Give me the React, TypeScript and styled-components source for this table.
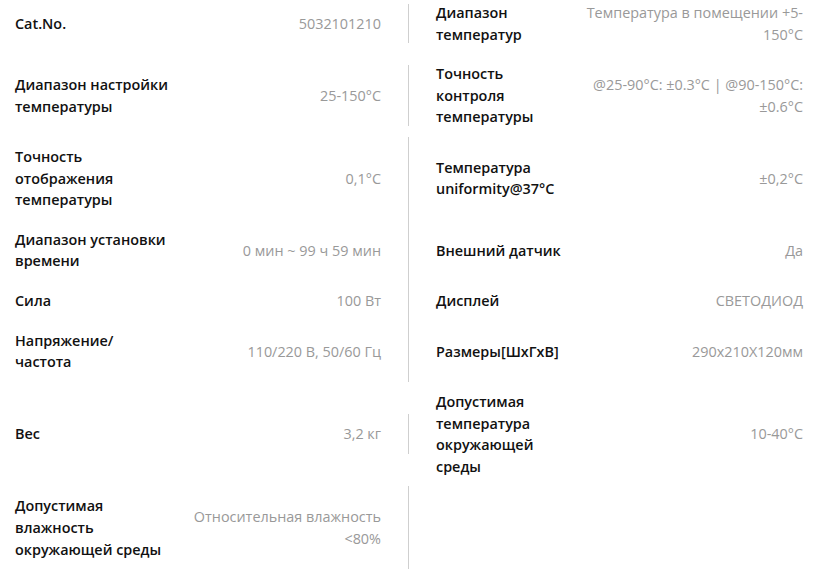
import React from "react";
import styled, { createGlobalStyle } from "styled-components";

const Global = createGlobalStyle`
  html, body { margin: 0; padding: 0; background: #fff; }
  body { font-family: "Open Sans", "Noto Sans", sans-serif; font-size: 14.4px; line-height: 1.5; }
`;

const Specs = styled.div`
  padding: 0 36px 0 15px;
  margin-top: -7px;
`;

const Row = styled.div`
  display: grid;
  grid-template-columns: 1fr 1fr;
  align-items: center;
`;

const Half = styled.div<{ $side: "left" | "right" }>`
  display: flex;
  align-items: center;
  padding: ${(p) => (p.$side === "left" ? "9px 27px 9px 0" : "9px 0 9px 27px")};
  border-right: ${(p) => (p.$side === "left" ? "1px solid #cfcfcf" : "none")};
`;

const Label = styled.div<{ $w: number }>`
  flex: 0 0 ${(p) => p.$w}px;
  font-weight: 600;
  color: #111;
`;

const Value = styled.div`
  flex: 1;
  text-align: right;
  color: #999;
`;

type Item = { label: string; value: string };
const rows: [Item, Item | null][] = [
  [
    { label: "Cat.No.", value: "5032101210" },
    { label: "Диапазон температур", value: "Температура в помещении +5-150°C" },
  ],
  [
    { label: "Диапазон настройки температуры", value: "25-150°C" },
    { label: "Точность контроля температуры", value: "@25-90°C: ±0.3°C | @90-150°C: ±0.6°C" },
  ],
  [
    { label: "Точность отображения температуры", value: "0,1°C" },
    { label: "Температура uniformity@37°C", value: "±0,2°C" },
  ],
  [
    { label: "Диапазон установки времени", value: "0 мин ~ 99 ч 59 мин" },
    { label: "Внешний датчик", value: "Да" },
  ],
  [
    { label: "Сила", value: "100 Вт" },
    { label: "Дисплей", value: "СВЕТОДИОД" },
  ],
  [
    { label: "Напряжение/ частота", value: "110/220 В, 50/60 Гц" },
    { label: "Размеры[ШхГхВ]", value: "290x210X120мм" },
  ],
  [
    { label: "Вес", value: "3,2 кг" },
    { label: "Допустимая температура окружающей среды", value: "10-40°C" },
  ],
  [
    { label: "Допустимая влажность окружающей среды", value: "Относительная влажность <80%" },
    null,
  ],
];

export default function App() {
  return (
    <>
      <Global />
      <Specs>
        {rows.map(([l, r], i) => (
          <Row key={i}>
            <Half $side="left">
              <Label $w={156}>{l.label}</Label>
              <Value>{l.value}</Value>
            </Half>
            {r ? (
              <Half $side="right">
                <Label $w={130}>{r.label}</Label>
                <Value>{r.value}</Value>
              </Half>
            ) : (
              <div />
            )}
          </Row>
        ))}
      </Specs>
    </>
  );
}
